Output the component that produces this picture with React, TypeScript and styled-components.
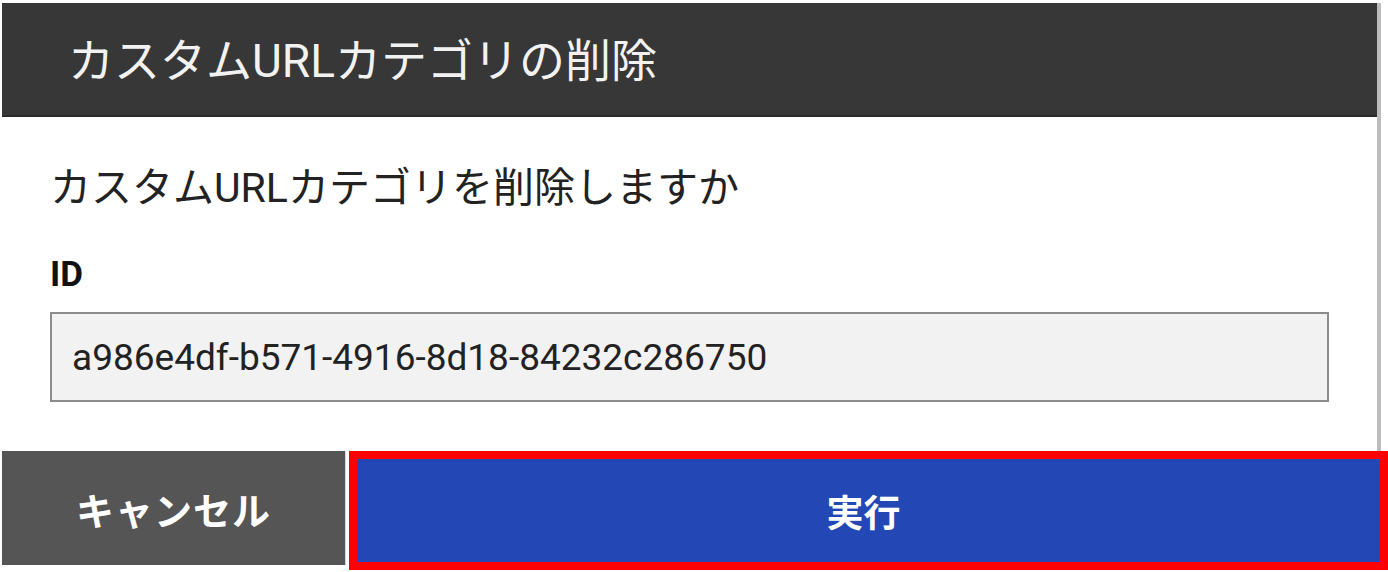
import React from 'react';
import styled, { createGlobalStyle } from 'styled-components';

const GlobalStyle = createGlobalStyle`
  html, body {
    margin: 0;
    padding: 0;
    background: #ffffff;
  }
  body {
    font-family: Roboto, "Noto Sans CJK JP", sans-serif;
    color: #222222;
  }
`;

const Page = styled.div`
  width: 1386px;
  padding: 3px 0 0 2px;
  display: flex;
  flex-direction: column;
`;

const Sheet = styled.div`
  width: 1375px;
  border-right: 4px solid #bcbcbc;
  display: flex;
  flex-direction: column;
`;

const Header = styled.div`
  height: 114px;
  box-sizing: border-box;
  background: #373737;
  border-bottom: 2px solid #2b2b2b;
  display: flex;
  align-items: center;
  padding: 4px 0 0 66px;
`;

const Title = styled.h1`
  margin: 0;
  font-size: 46px;
  font-weight: 400;
  color: #f2f2f2;
  line-height: 1;
`;

const Body = styled.div`
  padding: 41px 48px 49px 48px;
  display: flex;
  flex-direction: column;
`;

const Message = styled.p`
  margin: 0;
  font-size: 41px;
  line-height: 60px;
  color: #222222;
`;

const FieldLabel = styled.label`
  margin-top: 37px;
  font-size: 35px;
  font-weight: 700;
  line-height: 40px;
  color: #111111;
`;

const ReadOnlyField = styled.div`
  margin-top: 17px;
  height: 90px;
  box-sizing: border-box;
  border: 2px solid #8c8c8c;
  background: #f2f2f2;
  display: flex;
  align-items: center;
  padding-left: 20px;
  font-size: 37px;
  color: #222222;
`;

const Footer = styled.div`
  display: flex;
  align-items: flex-start;
  height: 119px;
`;

const ActionButton = styled.button<{ primary?: boolean }>`
  font-family: Roboto, "Noto Sans CJK JP", sans-serif;
  font-weight: 700;
  color: #ffffff;
  cursor: pointer;
  box-sizing: border-box;
  display: flex;
  align-items: center;
  justify-content: center;
  padding: 0;
  ${(props) =>
    props.primary
      ? `
    flex: 1;
    height: 119px;
    margin-left: 3px;
    padding-right: 10px;
    background: #2347b5;
    border: 8px solid #ff0000;
    font-size: 37px;
  `
      : `
    width: 344px;
    height: 114px;
    background: #555555;
    border: none;
    border-right: 1px solid #d8d8d8;
    font-size: 38px;
    letter-spacing: 1px;
  `}
`;

export default function App() {
  return (
    <>
      <GlobalStyle />
      <Page>
        <Sheet>
          <Header>
            <Title>カスタムURLカテゴリの削除</Title>
          </Header>
          <Body>
            <Message>カスタムURLカテゴリを削除しますか</Message>
            <FieldLabel>ID</FieldLabel>
            <ReadOnlyField>a986e4df-b571-4916-8d18-84232c286750</ReadOnlyField>
          </Body>
        </Sheet>
        <Footer>
          <ActionButton>キャンセル</ActionButton>
          <ActionButton primary>実行</ActionButton>
        </Footer>
      </Page>
    </>
  );
}
